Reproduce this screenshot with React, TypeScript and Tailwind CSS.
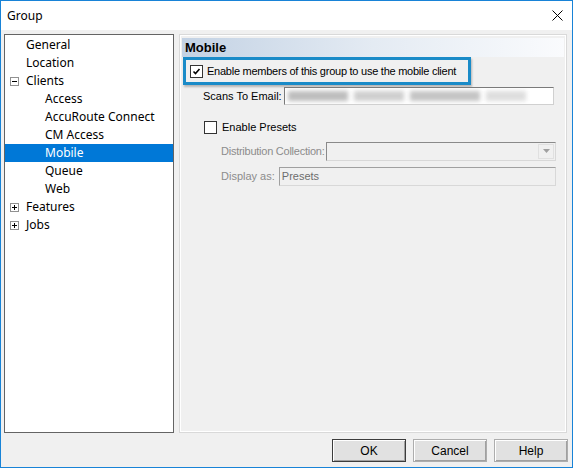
import React from 'react';

const ui = { fontFamily: '"Noto Sans", "Open Sans", sans-serif' };
const ms = { fontFamily: '"Liberation Sans", Arial, sans-serif' };

function Expander({ open }: { open: boolean }) {
  return (
    <svg width="9" height="9" viewBox="0 0 9 9" className="shrink-0">
      <rect x="0.5" y="0.5" width="8" height="8" fill="#fff" stroke="#919191" />
      <line x1="2" y1="4.5" x2="7" y2="4.5" stroke="#000" />
      {!open && <line x1="4.5" y1="2" x2="4.5" y2="7" stroke="#000" />}
    </svg>
  );
}

type Node = { label: string; depth: number; expander?: 'open' | 'closed'; selected?: boolean };

const nodes: Node[] = [
  { label: 'General', depth: 0 },
  { label: 'Location', depth: 0 },
  { label: 'Clients', depth: 0, expander: 'open' },
  { label: 'Access', depth: 1 },
  { label: 'AccuRoute Connect', depth: 1 },
  { label: 'CM Access', depth: 1 },
  { label: 'Mobile', depth: 1, selected: true },
  { label: 'Queue', depth: 1 },
  { label: 'Web', depth: 1 },
  { label: 'Features', depth: 0, expander: 'closed' },
  { label: 'Jobs', depth: 0, expander: 'closed' },
];

function Check({ checked }: { checked?: boolean }) {
  return (
    <div className="w-[13px] h-[13px] border border-[#333] bg-white shrink-0 flex items-center justify-center">
      {checked && (
        <svg width="9" height="9" viewBox="0 0 9 9">
          <path d="M1.5 4.5 L3.5 6.5 L7.5 2" fill="none" stroke="#000" strokeWidth="1.6" />
        </svg>
      )}
    </div>
  );
}

function Btn({ label, primary }: { label: string; primary?: boolean }) {
  return (
    <div
      className={`w-[74px] h-[23px] flex items-center justify-center bg-[#e1e1e1] text-[12px] text-black border shadow-[inset_1px_1px_0_#fff,inset_-1px_-1px_0_#a0a0a0] ${
        primary ? 'border-[#3c3c3c]' : 'border-[#adadad]'
      }`}
      style={ms}
    >
      {label}
    </div>
  );
}

export default function App() {
  return (
    <div className="w-[573px] h-[468px] border border-[#1883d7] bg-[#f0f0f0] flex flex-col overflow-hidden">
      {/* Title bar */}
      <div className="h-[29px] bg-white flex items-center justify-between pl-[6px] pr-[8px] shrink-0">
        <span className="text-[12px] text-black" style={ui}>Group</span>
        <svg width="11" height="11" viewBox="0 0 11 11" className="mr-[1px]">
          <path d="M0.5 0.5 L10.5 10.5 M10.5 0.5 L0.5 10.5" stroke="#000" strokeWidth="1" />
        </svg>
      </div>

      {/* Body */}
      <div className="flex pl-[3px] pr-[5px] pt-[4px] gap-[5px] h-[403px] shrink-0">
        {/* Tree */}
        <div className="w-[170px] border border-[#646464] bg-white pt-[1px]">
          {nodes.map((n) => (
            <div
              key={n.label}
              className={`h-[18px] flex items-center text-[12px] ${n.selected ? 'bg-[#0078d7] text-white' : 'text-black'}`}
              style={ui}
            >
              <div className="w-[21px] pl-[5px] shrink-0 flex items-center">
                {n.expander && <Expander open={n.expander === 'open'} />}
              </div>
              <span className={n.depth === 1 ? 'pl-[19px]' : ''}>{n.label}</span>
            </div>
          ))}
        </div>

        {/* Page panel */}
        <div className="flex-1 border border-[#d9d9d9]">
          <div className="h-full border border-white pt-[2px] pl-[1px] pr-[1px] text-[11px]" style={ms}>
            <div className="h-[19px] bg-gradient-to-r from-[#c3d2e4] via-[#e4ebf3] to-[#fafbfd] flex items-center pl-[3px]">
              <span className="text-[13px] font-bold text-black">Mobile</span>
            </div>

            <div className="ml-[1px] w-[288px] h-[28px] border-[3px] border-[#1a8bc8] shadow-[1px_2px_2px_rgba(0,0,0,0.25)] flex items-center pl-[4px] gap-[4px]">
              <Check checked />
              <span className="text-black whitespace-nowrap tracking-[-0.25px]">
                Enable members of this group to use the mobile client
              </span>
            </div>

            <div className="flex items-center mt-[2px] pl-[21px] pr-[10px]">
              <span className="text-black whitespace-nowrap">Scans To Email:</span>
              <div className="flex-1 ml-[2px] h-[18px] border border-[#7a7a7a] border-r-[#d0d0d0] border-b-[#d0d0d0] bg-white overflow-hidden flex items-center gap-[6px] px-[3px]">
                {/* redacted address, blurred in the source */}
                <div className="h-[10px] w-[60px] bg-[#bdbdbd] blur-[2px]" />
                <div className="h-[10px] w-[50px] bg-[#cfcfcf] blur-[2px]" />
                <div className="h-[10px] w-[70px] bg-[#c4c4c4] blur-[2px]" />
                <div className="h-[10px] w-[40px] bg-[#dedede] blur-[2px]" />
              </div>
            </div>

            <div className="flex items-center gap-[5px] mt-[14px] pl-[22px]">
              <Check />
              <span className="text-black">Enable Presets</span>
            </div>

            <div className="flex items-center mt-[6px] pl-[39px] pr-[8px]">
              <span className="text-[#8c8c8c] whitespace-nowrap tracking-[-0.25px]">Distribution Collection:</span>
              <div className="flex-1 ml-[2px] h-[19px] border border-[#8a8a8a] border-r-[#d8d8d8] border-b-[#d8d8d8] bg-[#f0f0f0] flex justify-end p-[1px]">
                <div className="w-[16px] h-full bg-[#f0f0f0] border border-[#e0e0e0] flex items-center justify-center">
                  <svg width="7" height="4" viewBox="0 0 7 4">
                    <path d="M0 0 H7 L3.5 4 Z" fill="#a0a0a0" />
                  </svg>
                </div>
              </div>
            </div>

            <div className="flex items-center mt-[6px] pl-[39px] pr-[8px]">
              <span className="text-[#8c8c8c] whitespace-nowrap">Display as:</span>
              <div className="flex-1 ml-[4px] h-[19px] border border-[#a0a0a0] border-r-[#d8d8d8] border-b-[#d8d8d8] bg-[#f0f0f0] flex items-center pl-[2px] text-[#6d6d6d]">
                Presets
              </div>
            </div>
          </div>
        </div>
      </div>

      {/* Buttons */}
      <div className="flex justify-end gap-[7px] mt-auto mb-[5px] pr-[4px]">
        <Btn label="OK" primary />
        <Btn label="Cancel" />
        <Btn label="Help" />
      </div>
    </div>
  );
}
